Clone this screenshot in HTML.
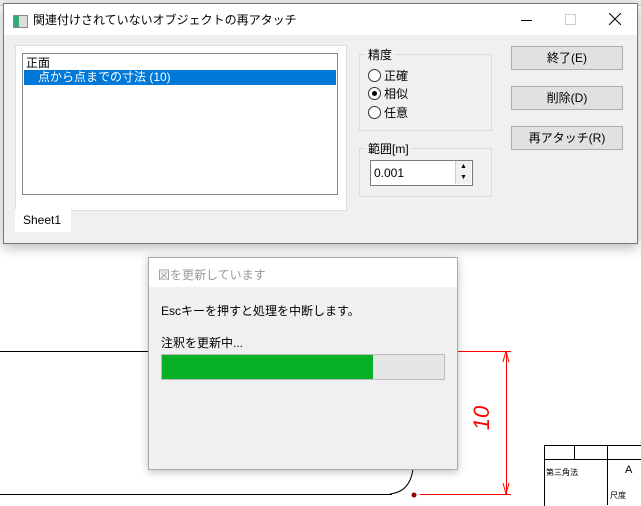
<html><head><style>
body{margin:0;width:641px;height:501px;overflow:hidden;background:#fff;font-family:"Liberation Sans","Noto Sans CJK JP",sans-serif;font-size:12px;color:#000;position:relative}
.a{position:absolute}
.btn{position:absolute;left:511px;width:110px;height:22px;background:#e1e1e1;border:1px solid #adadad;text-align:center;line-height:22px;font-size:12px}
.rad{position:absolute;left:368px;width:11px;height:11px;border:1px solid #333;border-radius:50%;background:#fff}
</style></head><body>
<div class="a" style="left:0;top:0;width:641px;height:5px;background:#f0f0f0;border-bottom:1px solid #ccc"></div>
<!-- drawing -->
<div class="a" style="left:0;top:351px;width:148px;height:1px;background:#000"></div>
<div class="a" style="left:457px;top:351px;width:54px;height:1px;background:#f00"></div>
<div class="a" style="left:506px;top:351px;width:1px;height:144px;background:#f00"></div>
<div class="a" style="left:0;top:494px;width:392px;height:1px;background:#000"></div>
<svg class="a" style="left:380px;top:465px" width="140" height="36"><path d="M10 29 Q30 27 33 4" stroke="#000" fill="none"/><circle cx="34" cy="30" r="2.5" fill="#900"/><line x1="40" y1="29.5" x2="131" y2="29.5" stroke="#f00"/><path d="M126 29 L123 18 M126 29 L129 18" stroke="#f00"/></svg>
<svg class="a" style="left:500px;top:351px" width="14" height="14"><path d="M6 0 L3 11 M6 0 L9 11" stroke="#f00"/></svg>
<div class="a" style="left:470px;top:405px;color:#f00;font-size:22px;font-style:italic;transform:rotate(-90deg)">10</div>
<div class="a" style="left:544px;top:445px;width:100px;height:60px;border-top:1px solid #000;border-left:1px solid #000"></div>
<div class="a" style="left:544px;top:459px;width:100px;height:1px;background:#000"></div>
<div class="a" style="left:574px;top:445px;width:1px;height:14px;background:#000"></div>
<div class="a" style="left:607px;top:445px;width:1px;height:60px;background:#000"></div>
<div class="a" style="left:546px;top:467px;font-size:8px">第三角法</div>
<div class="a" style="left:625px;top:464px;font-size:11px">A</div>
<div class="a" style="left:610px;top:490px;font-size:8px">尺度</div>
<!-- main dialog -->
<div class="a" style="left:3px;top:3px;width:633px;height:239px;background:#f0f0f0;border:1px solid #777;box-shadow:0 3px 12px rgba(0,0,0,.3)">
<div class="a" style="left:0;top:0;width:633px;height:31px;background:#fff"></div>
<div class="a" style="left:9px;top:11px;width:13px;height:11px;border:1px solid #888;background:linear-gradient(90deg,#3a7 0 40%,#ddd 40%)"></div>
<div class="a" style="left:29px;top:7px;font-size:12px">関連付けされていないオブジェクトの再アタッチ</div>
<div class="a" style="left:517px;top:16px;width:11px;height:1px;background:#000"></div>
<div class="a" style="left:561px;top:10px;width:9px;height:9px;border:1px solid #ccc"></div>
<svg class="a" style="left:605px;top:9px" width="12" height="12"><path d="M0 0L12 12M12 0L0 12" stroke="#000"/></svg>
</div>
<div class="a" style="left:15px;top:45px;width:330px;height:164px;background:#fff;border:1px solid #ddd"></div>
<div class="a" style="left:22px;top:53px;width:314px;height:140px;background:#fff;border:1px solid #828790"></div>
<div class="a" style="left:26px;top:54px">正面</div>
<div class="a" style="left:24px;top:70px;width:312px;height:15px;background:#0078d7;color:#fff;line-height:15px;text-indent:14px">点から点までの寸法 (10)</div>
<div class="a" style="left:15px;top:209px;width:56px;height:23px;background:#fff;line-height:23px;text-indent:8px">Sheet1</div>
<div class="a" style="left:359px;top:54px;width:131px;height:75px;border:1px solid #dcdcdc"></div>
<div class="a" style="left:366px;top:46px;background:#f0f0f0;padding:0 2px">精度</div>
<div class="rad" style="top:69px"></div><div class="a" style="left:384px;top:67px">正確</div>
<div class="rad" style="top:87px"></div><div class="a" style="left:372px;top:91px;width:5px;height:5px;border-radius:50%;background:#000"></div><div class="a" style="left:384px;top:85px">相似</div>
<div class="rad" style="top:106px"></div><div class="a" style="left:384px;top:104px">任意</div>
<div class="a" style="left:359px;top:148px;width:131px;height:47px;border:1px solid #dcdcdc"></div>
<div class="a" style="left:366px;top:140px;background:#f0f0f0;padding:0 2px">範囲[m]</div>
<div class="a" style="left:370px;top:160px;width:101px;height:24px;background:#fff;border:1px solid #7a7a7a;line-height:24px;text-indent:3px">0.001</div>
<div class="a" style="left:455px;top:161px;width:15px;height:23px;background:#f0f0f0;border-left:1px solid #ccc;font-size:7px;line-height:11px;text-align:center">▲<br>▼</div>
<div class="btn" style="top:46px">終了(E)</div>
<div class="btn" style="top:86px">削除(D)</div>
<div class="btn" style="top:126px">再アタッチ(R)</div>
<!-- progress dialog -->
<div class="a" style="left:148px;top:257px;width:308px;height:211px;background:#f0f0f0;border:1px solid #aaa;box-shadow:0 2px 8px rgba(0,0,0,.25)">
<div class="a" style="left:0;top:0;width:308px;height:29px;background:#fff"></div>
<div class="a" style="left:9px;top:8px;color:#999">図を更新しています</div>
<div class="a" style="left:12px;top:44px">Escキーを押すと処理を中断します。</div>
<div class="a" style="left:12px;top:76px">注釈を更新中...</div>
<div class="a" style="left:12px;top:96px;width:282px;height:24px;background:#e6e6e6;border:1px solid #bcbcbc"><div style="width:211px;height:24px;background:#06b025"></div></div>
</div>
</body></html>
